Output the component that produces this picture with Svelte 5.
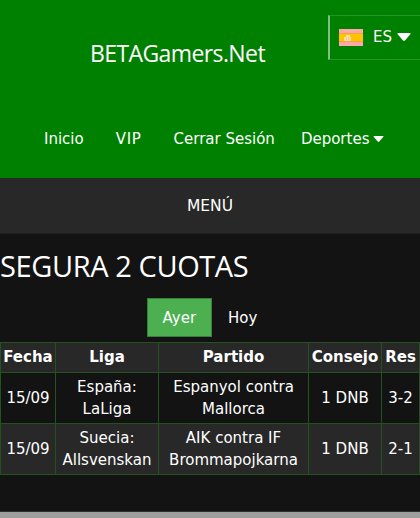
<script>
	let selected = 'Ayer';

	const days = ['Ayer', 'Hoy'];
	const links = ['Inicio', 'VIP', 'Cerrar Sesión'];
	const tips = [
		{ date: '15/09', league: ['España:', 'LaLiga'], match: ['Espanyol contra', 'Mallorca'], tip: '1 DNB', result: '3-2' },
		{ date: '15/09', league: ['Suecia:', 'Allsvenskan'], match: ['AIK contra IF', 'Brommapojkarna'], tip: '1 DNB', result: '2-1' }
	];
</script>

<div class="page">
	<header>
		<button class="language">
			<svg class="flag" viewBox="0 0 24 17">
				<rect width="24" height="17" fill="#ffa8a8" />
				<rect y="4" width="24" height="9" fill="#ffc400" />
				<path d="M0 4.5h24M0 12.5h24" stroke="#ff9c45" />
				<path d="M5 12V8h2V6h4v2h1v4z" fill="#ffdda0" />
				<path d="M7 9h1v2H7zM9 8h1v3H9z" fill="#f5c890" />
			</svg>
			<span>ES</span>
			<svg class="caret" viewBox="0 0 14 8"><path d="M1 0h12q1 0 .5 1L8 7.4q-1 .9-2 0L.5 1Q0 0 1 0z" /></svg>
		</button>
		<div class="logo">BETAGamers.Net</div>
		<nav>
			{#each links as link}
				<a href="#top">{link}</a>
			{/each}
			<a href="#top">Deportes<svg class="caret small" viewBox="0 0 14 8"><path d="M1 0h12q1 0 .5 1L8 7.4q-1 .9-2 0L.5 1Q0 0 1 0z" /></svg></a>
		</nav>
	</header>

	<div class="menu">MENÚ</div>

	<main>
		<h1>SEGURA 2 CUOTAS</h1>
		<div class="tabs">
			{#each days as day}
				<button class:active={selected === day} on:click={() => (selected = day)}>{day}</button>
			{/each}
		</div>
		<table>
			<colgroup>
				<col class="date" />
				<col class="league" />
				<col class="match" />
				<col class="tip" />
				<col />
			</colgroup>
			<thead>
				<tr><th>Fecha</th><th>Liga</th><th>Partido</th><th>Consejo</th><th>Res</th></tr>
			</thead>
			<tbody>
				{#each tips as row}
					<tr>
						<td>{row.date}</td>
						<td>{row.league[0]}<br />{row.league[1]}</td>
						<td>{row.match[0]}<br />{row.match[1]}</td>
						<td>{row.tip}</td>
						<td>{row.result}</td>
					</tr>
				{/each}
			</tbody>
		</table>
	</main>
	<footer></footer>
</div>

<style>
	:global(body) {
		margin: 0;
		background: #131313;
	}

	.page {
		display: flex;
		flex-direction: column;
		height: 518px;
		overflow: hidden;
		color: #fff;
		font: 15px/22px Verdana, 'DejaVu Sans', sans-serif;
	}

	header {
		display: flex;
		flex-direction: column;
		position: relative;
		box-sizing: border-box;
		height: 178px;
		padding-top: 36px;
		background: #008000;
	}

	button {
		font: inherit;
		color: inherit;
		cursor: pointer;
	}

	.language {
		display: flex;
		align-items: center;
		position: absolute;
		top: 15px;
		right: 0;
		box-sizing: border-box;
		width: 92px;
		height: 45px;
		padding: 0 0 2px 9px;
		border: 1px solid #269326;
		border-width: 1px 0 1px 2px;
		border-left-color: #80c080;
		background: none;
	}

	.language span {
		margin: 0 5px 0 10px;
		font-size: 15px;
	}

	.flag {
		width: 24px;
		height: 17px;
		margin-top: 2px;
	}

	.caret {
		width: 14px;
		height: 8px;
		fill: #fff;
	}

	.small {
		width: 11px;
		height: 6px;
		margin-left: 4px;
		vertical-align: 2px;
	}

	.logo {
		padding-left: 90px;
		font: 23px/34px 'Segoe UI', 'Open Sans', sans-serif;
		letter-spacing: -0.6px;
	}

	nav {
		display: flex;
		gap: 32px;
		margin-top: 58px;
		padding-left: 44px;
		white-space: nowrap;
	}

	nav a {
		color: inherit;
		text-decoration: none;
	}

	nav a:nth-child(2) {
		letter-spacing: 0.7px;
	}

	nav a:last-child {
		margin-left: -6px;
	}

	.menu {
		height: 55px;
		border-bottom: 1px solid #202020;
		background: #282828;
		font-size: 15.5px;
		line-height: 56px;
		text-align: center;
	}

	main {
		flex: 1;
	}

	h1 {
		margin: 11px 0 12px;
		font: 29px/41px 'Segoe UI', 'Open Sans', sans-serif;
		letter-spacing: -0.4px;
		white-space: nowrap;
	}

	.tabs {
		display: flex;
		justify-content: center;
	}

	.tabs button {
		height: 39px;
		padding: 0 15px;
		border: 1px solid transparent;
		background: none;
	}

	.tabs .active {
		border-color: #397e3b;
		background: #4caf50;
	}

	table {
		width: 420px;
		margin-top: 5px;
		border-collapse: collapse;
		table-layout: fixed;
		text-align: center;
		white-space: nowrap;
	}

	.date {
		width: 55px;
	}

	.league {
		width: 103px;
	}

	.match {
		width: 150px;
	}

	.tip {
		width: 73px;
	}

	th,
	td {
		height: 50px;
		padding: 0;
		border: 1px solid #24521f;
	}

	th {
		height: 27px;
		padding-bottom: 2px;
	}

	tr:nth-child(even),
	thead tr {
		background: #282828;
	}

	footer {
		height: 6px;
		border-top: 1px solid #303030;
		background: #9e9e9e;
	}
</style>
